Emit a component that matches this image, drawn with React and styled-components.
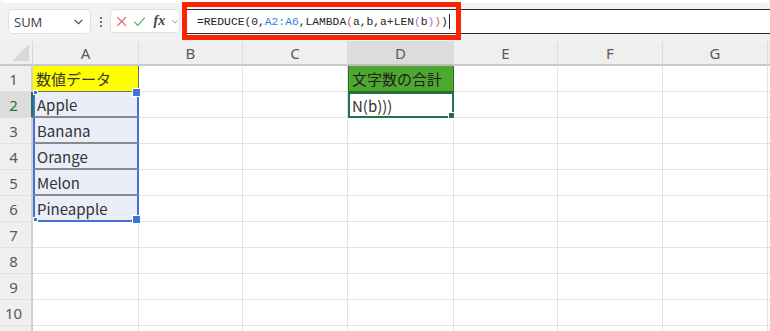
import React from 'react';
import styled, { createGlobalStyle, css } from 'styled-components';

const GlobalStyle = createGlobalStyle`
  html, body { margin: 0; padding: 0; background: #fff; }
  body { font-family: "Noto Sans CJK JP", "Noto Sans", sans-serif; }
`;

const COLS = [
  { key: 'A', w: 106 },
  { key: 'B', w: 104 },
  { key: 'C', w: 105 },
  { key: 'D', w: 106 },
  { key: 'E', w: 104 },
  { key: 'F', w: 105 },
  { key: 'G', w: 105 },
];
const ROWS = [1, 2, 3, 4, 5, 6, 7, 8, 9, 10, 11];
const FRUITS = ['Apple', 'Banana', 'Orange', 'Melon', 'Pineapple'];

const Page = styled.div`
  width: 770px;
  height: 331px;
  overflow: hidden;
  background: #fff;
`;

const Toolbar = styled.div`
  position: relative;
  height: 41px;
  background: #f2f2f2;
  display: flex;
  align-items: flex-start;
  padding-top: 9px;
  box-sizing: border-box;
  &::before {
    content: '';
    position: absolute;
    left: 0;
    right: 0;
    top: -4px;
    height: 7px;
    background: #fff;
    border-radius: 0 0 5px 5px;
  }
`;

const NameBox = styled.div`
  margin-left: 8px;
  width: 83px;
  height: 25px;
  box-sizing: border-box;
  background: #fff;
  border: 1px solid #e0e0e0;
  border-radius: 4px;
  display: flex;
  align-items: center;
  justify-content: space-between;
  padding: 0 6px 0 5px;
  font-family: "Open Sans", "Noto Sans", sans-serif;
  font-size: 13px;
  color: #3c3c3c;
`;

const Dots = styled.div`
  width: 19px;
  display: flex;
  flex-direction: column;
  align-items: center;
  gap: 2px;
  padding-top: 8px;
  span {
    width: 2px;
    height: 2px;
    background: #444;
    border-radius: 1px;
  }
`;

const IconBox = styled.div`
  width: 70px;
  height: 24px;
  box-sizing: border-box;
  background: #fff;
  border: 1px solid #e0e0e0;
  border-radius: 4px;
  display: flex;
  align-items: center;
  gap: 6px;
  padding-left: 5px;
`;

const Fx = styled.span`
  font-family: "Liberation Serif", serif;
  font-style: italic;
  font-weight: bold;
  font-size: 14px;
  color: #444;
  margin-left: 1px;
`;

const FormulaInput = styled.div`
  margin-left: 3px;
  flex: 1;
  height: 25px;
  box-sizing: border-box;
  background: #fff;
  border-top: 1px solid #2a2a2a;
  border-bottom: 1px solid #2a2a2a;
  display: flex;
  align-items: center;
  padding-left: 14px;
  font-family: "Liberation Mono", "DejaVu Sans Mono", monospace;
  font-size: 11.3px;
  color: #222;
  white-space: pre;
`;

const Tok = styled.span`
  color: ${(p) => p.$c || '#222'};
`;

const Caret = styled.span`
  display: inline-block;
  width: 1px;
  height: 15px;
  background: #222;
  margin-left: 1px;
`;

const Callout = styled.div`
  position: absolute;
  left: 182px;
  top: 2px;
  width: 279px;
  height: 38px;
  box-sizing: border-box;
  border: 5px solid #ff2200;
  pointer-events: none;
`;

const Grid = styled.div`
  display: grid;
  grid-template-columns: 33px ${COLS.map((c) => `${c.w}px`).join(' ')} 1fr;
  grid-template-rows: 25px repeat(11, 26px);
`;

const Corner = styled.div`
  background: #efefef;
  border-bottom: 2px solid #c8c8c8;
  border-right: 1px solid #d6d6d6;
  box-sizing: border-box;
  position: relative;
  &::after {
    content: '';
    position: absolute;
    right: 3px;
    bottom: 3px;
    border-style: solid;
    border-width: 0 0 17px 17px;
    border-color: transparent transparent #d8d8d8 transparent;
  }
`;

const ColHead = styled.div`
  background: ${(p) => (p.$active ? '#dcdcdc' : '#efefef')};
  border-bottom: 2px solid ${(p) => (p.$active ? '#bdbdbd' : '#c8c8c8')};
  border-right: 1px solid #dcdcdc;
  box-sizing: border-box;
  display: flex;
  align-items: center;
  justify-content: center;
  font-family: "Noto Sans", sans-serif;
  font-size: 15px;
  color: #5a5a5a;
`;

const RowHead = styled.div`
  background: ${(p) => (p.$active ? '#dcdcdc' : '#efefef')};
  border-bottom: 1px solid #e0e0e0;
  border-right: ${(p) => (p.$active ? '2px solid #217346' : '2px solid #d0d0d0')};
  box-sizing: border-box;
  display: flex;
  align-items: center;
  justify-content: center;
  padding-right: 4px;
  font-family: "Noto Sans", sans-serif;
  font-size: 15px;
  color: ${(p) => (p.$active ? '#217346' : '#5a5a5a')};
`;

const Cell = styled.div`
  position: relative;
  box-sizing: border-box;
  border-right: 1px solid #e2e2e2;
  border-bottom: 1px solid #e2e2e2;
  display: flex;
  align-items: center;
  padding-left: 3px;
  font-size: 15px;
  color: #333;
  white-space: nowrap;
  overflow: visible;
  ${(p) =>
    p.$variant === 'yellow' &&
    css`
      background: #ffff00;
      border: 1px solid #6b6b6b;
      border-top: none;
      border-left: none;
      color: #333;
    `}
  ${(p) =>
    p.$variant === 'range' &&
    css`
      background: #e9eef8;
      border-left: 2px solid #3f74d4;
      border-right: 2px solid #3f74d4;
      border-bottom: ${p.$last ? '2px solid #3f74d4' : '2px solid #8a8a8a'};
      padding-left: 2px;
    `}
  ${(p) =>
    p.$variant === 'green' &&
    css`
      background: #4ea72e;
      border: 1px solid #2f6d22;
      border-top: none;
      border-left: 1px solid #2f6d22;
      color: #1e1e1e;
      padding-left: 3px;
    `}
  ${(p) =>
    p.$variant === 'active' &&
    css`
      border: 2px solid #217346;
      padding-left: 2px;
    `}
`;

const Handle = styled.span`
  position: absolute;
  width: ${(p) => p.$size}px;
  height: ${(p) => p.$size}px;
  background: ${(p) => p.$color};
  border: 1px solid #fff;
  ${(p) => (p.$top ? 'top' : 'bottom')}: -${(p) => p.$off}px;
  ${(p) => (p.$left ? 'left' : 'right')}: -${(p) => p.$off}px;
  z-index: 2;
`;

const Chevron = ({ size = 10, color = '#555' }) => (
  <svg width={size} height={size} viewBox="0 0 10 10">
    <path d="M1.5 3.5 L5 7 L8.5 3.5" fill="none" stroke={color} strokeWidth="1.1" />
  </svg>
);

function cellFor(col, row) {
  if (col === 'A' && row === 1) return { variant: 'yellow', text: '数値データ' };
  if (col === 'A' && row >= 2 && row <= 6)
    return { variant: 'range', text: FRUITS[row - 2], first: row === 2, last: row === 6 };
  if (col === 'D' && row === 1) return { variant: 'green', text: '文字数の合計' };
  if (col === 'D' && row === 2) return { variant: 'active', text: 'N(b)))' };
  return { variant: null, text: '' };
}

const App = () => (
  <Page>
    <GlobalStyle />
    <Toolbar>
      <NameBox>
        SUM
        <Chevron size={11} color="#444" />
      </NameBox>
      <Dots>
        <span />
        <span />
        <span />
      </Dots>
      <IconBox>
        <svg width="13" height="13" viewBox="0 0 13 13">
          <path d="M1.5 1.5 L11.5 11.5 M11.5 1.5 L1.5 11.5" stroke="#e05a5a" strokeWidth="1.3" />
        </svg>
        <svg width="15" height="13" viewBox="0 0 15 13">
          <path d="M1.5 7 L5.5 11 L13.5 2" fill="none" stroke="#4fae5a" strokeWidth="1.3" />
        </svg>
        <Fx>fx</Fx>
        <Chevron size={9} color="#888" />
      </IconBox>
      <FormulaInput>
        <Tok>=REDUCE(0,</Tok>
        <Tok $c="#2f7fd8">A2:A6</Tok>
        <Tok>,LAMBDA</Tok>
        <Tok $c="#e0533c">(</Tok>
        <Tok>a,b,a+LEN</Tok>
        <Tok $c="#9b6fd6">(</Tok>
        <Tok>b</Tok>
        <Tok $c="#9b6fd6">)</Tok>
        <Tok $c="#e0533c">)</Tok>
        <Tok>)</Tok>
        <Caret />
      </FormulaInput>
      <Callout />
    </Toolbar>
    <Grid>
      <Corner />
      {COLS.map((c) => (
        <ColHead key={c.key} $active={c.key === 'D'}>
          {c.key}
        </ColHead>
      ))}
      <ColHead />
      {ROWS.map((r) => (
        <React.Fragment key={r}>
          <RowHead $active={r === 2}>{r <= 10 ? r : ''}</RowHead>
          {COLS.map((c) => {
            const info = cellFor(c.key, r);
            return (
              <Cell key={c.key} $variant={info.variant} $last={info.last}>
                {info.text}
                {info.first && (
                  <>
                    <Handle $size={3} $color="#3f74d4" $top $left $off={2} />
                    <Handle $size={7} $color="#3f74d4" $top $off={4} />
                  </>
                )}
                {info.last && (
                  <>
                    <Handle $size={3} $color="#3f74d4" $left $off={2} />
                    <Handle $size={7} $color="#3f74d4" $off={4} />
                  </>
                )}
                {info.variant === 'active' && <Handle $size={5} $color="#217346" $off={3} />}
              </Cell>
            );
          })}
          <Cell />
        </React.Fragment>
      ))}
    </Grid>
  </Page>
);

export default App;
